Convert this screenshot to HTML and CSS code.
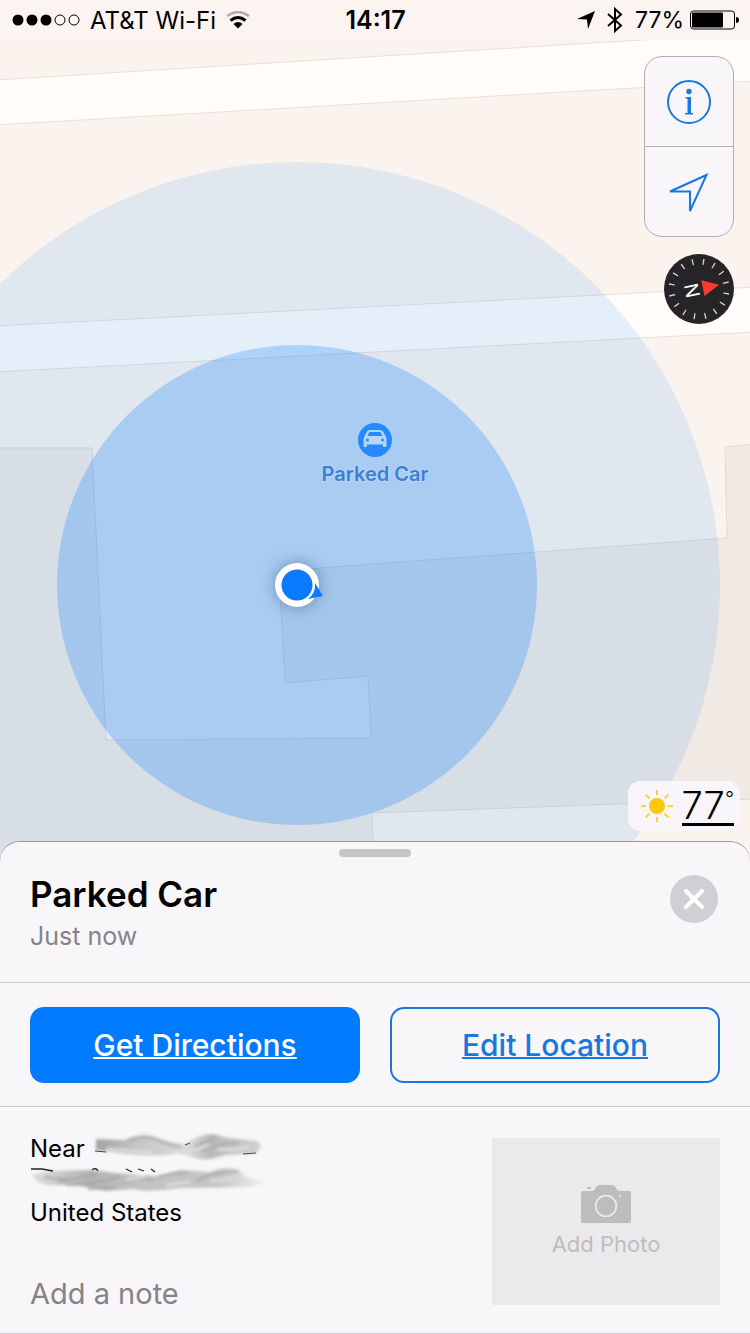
FILE: index.html
```html
<!DOCTYPE html>
<html lang="en">
<head>
    <meta charset="UTF-8">
    <meta name="viewport" content="width=device-width, initial-scale=1.0">
    <title>Maps - Parked Car</title>
    <link rel="stylesheet" href="styles.css">
</head>
<body>
    <main class="map">
        <svg class="map-canvas" viewBox="0 0 750 861" preserveAspectRatio="xMidYMax slice">
            <!-- roads -->
            <g class="road">
                <path d="M-5 80 L755 33 V81 L-5 125 Z"/>
                <path d="M-5 326 L755 287 V332 L-5 372 Z"/>
            </g>
            <!-- buildings -->
            <path class="building" d="M-5 448 H92 L106 740 L371 738 L368 676 L285 683 L279 571 L727 538 L725 447 L755 444 V799 L372 813 L374 870 H-5 Z"/>
            <!-- accuracy rings -->
            <circle class="ring-outer" cx="297" cy="585" r="423"/>
            <circle class="ring-inner" cx="297" cy="585" r="240"/>

            <!-- parked car pin -->
            <circle cx="375" cy="440" r="17" fill="#2589fb"/>
            <path fill="#b5d6fa" fill-rule="evenodd" d="M364 437 L367 431.500 Q368 430 370 430 H380 Q382 430 383 431.500 L386 437 Q386.500 438 386.500 440 V446 Q386.500 447 385.500 447 H384 Q383 447 383 446 V444.500 H367 V446 Q367 447 366 447 H364.500 Q363.500 447 363.500 446 V440 Z M369.500 432 L367.500 436 H382.500 L380.500 432 Z"/>
            <circle cx="367.500" cy="440" r="1.500" fill="#2589fb"/>
            <circle cx="382.500" cy="440" r="1.500" fill="#2589fb"/>
            <text class="pin-label" x="375" y="481">Parked Car</text>

            <!-- current location -->
            <circle class="me" cx="297" cy="585" r="22"/>
            <circle cx="297" cy="585" r="15.500" fill="#0a7aff"/>
            <path d="M315 583 L323 596 L308 599 Q316 593 315 583 Z" fill="#0a7aff"/>
        </svg>

        <header class="status-bar">
            <div class="carrier">
                <svg width="68" height="12" viewBox="0 0 68 12">
                    <circle cx="6" cy="6" r="5.500"/>
                    <circle cx="20" cy="6" r="5.500"/>
                    <circle cx="34" cy="6" r="5.500"/>
                    <circle cx="48" cy="6" r="5" fill="none" stroke="#000"/>
                    <circle cx="62" cy="6" r="5" fill="none" stroke="#000"/>
                </svg>
                <span>AT&amp;T Wi-Fi</span>
                <svg width="24" height="18" viewBox="0 0 24 18">
                    <path d="M1 5 Q12 -3 23 5" fill="none" stroke="#b3aca9" stroke-width="2.500"/>
                    <path d="M4.500 9.500 Q12 3.500 19.500 9.500" fill="none" stroke="#000" stroke-width="3"/>
                    <path d="M7.500 13 Q12 9 16.500 13 L12 17.500 Z"/>
                </svg>
            </div>
            <time>14:17</time>
            <div class="indicators">
                <svg width="18" height="18" viewBox="0 0 18 18"><path d="M18 0 L0 8 L10 8.500 L11 18 Z"/></svg>
                <svg class="bluetooth" width="16" height="28" viewBox="0 0 16 28">
                    <path d="M1 8 L14 19.500 L8 25 V3 L14 8.500 L1 20" fill="none" stroke="#000" stroke-width="2"/>
                </svg>
                <span class="percent">77%</span>
                <svg width="49" height="20" viewBox="0 0 49 20">
                    <rect x="0.500" y="1" width="44" height="18" rx="3" fill="none" stroke="#000"/>
                    <rect x="2" y="2.500" width="31" height="15" rx="1"/>
                    <path d="M46 7 Q49 7 49 10 Q49 13 46 13 Z"/>
                </svg>
            </div>
        </header>

        <div class="map-tools">
            <div class="tool-box">
                <button type="button" aria-label="Map info">
                    <svg width="44" height="44" viewBox="0 0 44 44">
                        <circle cx="22" cy="22" r="21" fill="none" stroke="#1878e0" stroke-width="2"/>
                        <circle cx="22" cy="11.500" r="2.700" fill="#1878e0"/>
                        <path d="M18.500 17 H24 V33 H26 V34.500 H18 V33 H20.500 V18.500 H18.500 Z" fill="#1878e0"/>
                    </svg>
                </button>
                <button type="button" aria-label="Track location">
                    <svg width="44" height="44" viewBox="0 0 44 44">
                        <path d="M39.500 5 L3 21.500 H23 V41 Z" fill="none" stroke="#1878e0" stroke-width="2"/>
                    </svg>
                </button>
            </div>
            <button class="compass" type="button" aria-label="Compass">
                <svg width="70" height="70" viewBox="0 0 70 70">
                    <circle cx="35" cy="35" r="35" fill="#262427"/>
                    <circle cx="35" cy="35" r="27.500" fill="none" stroke="#d8d6d6" stroke-width="6" pathLength="160" stroke-dasharray="1.200 8.800" transform="rotate(8 35 35)"/>
                    <g transform="rotate(78 35 35)">
                        <path d="M35 14.500 L43 31 H27 Z" fill="#fb3b30"/>
                        <text class="compass-n" x="35" y="49">N</text>
                    </g>
                </svg>
            </button>
        </div>

        <a class="weather" href="#weather">
            <svg width="34" height="34" viewBox="0 0 34 34">
                <circle cx="17" cy="17" r="8" fill="#fdc70c"/>
                <path d="M17 1 V6 M17 28 V33 M1 17 H6 M28 17 H33 M5.500 5.500 L9.500 9.500 M24.500 24.500 L28.500 28.500 M28.500 5.500 L24.500 9.500 M5.500 28.500 L9.500 24.500" stroke="#fbd049" stroke-width="2"/>
            </svg>
            <span class="temp">77<span class="degree">°</span></span>
        </a>
    </main>

    <section class="sheet">
        <div class="handle"></div>
        <div class="sheet-header">
            <div>
                <h1>Parked Car</h1>
                <p>Just now</p>
            </div>
            <button class="close" type="button" aria-label="Close">
                <svg width="48" height="48" viewBox="0 0 48 48">
                    <path d="M16 16 L32 32 M32 16 L16 32" stroke="#fff" stroke-width="4" stroke-linecap="round"/>
                </svg>
            </button>
        </div>

        <div class="actions">
            <a class="btn primary" href="#directions">Get Directions</a>
            <a class="btn" href="#edit">Edit Location</a>
        </div>

        <div class="details">
            <div class="info">
                <address>
                    <div class="line">Near
                        <svg width="172" height="32" viewBox="0 0 172 32">
                            <defs>
                                <filter id="soft" x="-10%" y="-30%" width="120%" height="160%"><feGaussianBlur stdDeviation="1.500"/></filter>
                                <filter id="streak" x="-10%" y="-60%" width="120%" height="220%"><feGaussianBlur stdDeviation="0.500"/></filter>
                                <linearGradient id="ink1" x1="0" x2="1" y1="0" y2="0">
                                    <stop offset="0" stop-color="#a3a2a4"/>
                                    <stop offset="0.250" stop-color="#c6c5c7"/>
                                    <stop offset="0.550" stop-color="#dbdadc"/>
                                    <stop offset="0.700" stop-color="#b9b8ba"/>
                                    <stop offset="1" stop-color="#d0cfd1"/>
                                </linearGradient>
                                <linearGradient id="ink2" x1="0" x2="1" y1="0" y2="0">
                                    <stop offset="0" stop-color="#dedde0"/>
                                    <stop offset="0.250" stop-color="#b2b1b3"/>
                                    <stop offset="0.450" stop-color="#c2c1c3"/>
                                    <stop offset="0.800" stop-color="#c4c3c5"/>
                                    <stop offset="1" stop-color="#f4f2f5"/>
                                </linearGradient>
                            </defs>
                            <g filter="url(#soft)">
                                <path d="M3 8 L32 9 Q46 2 60 5 Q76 11 92 13 Q106 3 120 3 L136 7 L164 10 L168 14 L164 22 L132 24 Q112 31 102 27 L84 22 Q70 26 44 24 L3 19 Z" fill="url(#ink1)"/>
                                <path d="M34 10 Q50 4 62 8 Q74 14 88 16 M100 17 Q112 10 122 7 M108 21 Q130 11 146 12" fill="none" stroke="#a9a8ab" stroke-width="2"/>
                                <path d="M14 18 Q40 20 60 22 M94 19 Q108 18 116 14 M124 18 Q140 20 156 16" fill="none" stroke="#dddcde" stroke-width="3"/>
                            </g>
                            <path d="M2 20 L13 21 M92 14 L97 12 M150 23 L163 22" fill="none" stroke="#444" filter="url(#streak)"/>
                        </svg>
                    </div>
                    <div class="line">
                        <svg width="236" height="32" viewBox="0 0 236 32">
                            <g filter="url(#soft)">
                                <path d="M2 11 L22 8 L60 7 L96 11 L126 13 L150 7 L180 9 Q194 3 208 6 L216 14 L236 19 L222 24 L150 25 Q116 30 104 26 L76 28 L50 23 L18 22 Q4 20 2 11 Z" fill="url(#ink2)"/>
                                <path d="M14 14 Q28 17 44 16 M28 19 Q50 15 66 11 M36 22 Q66 21 90 14 M94 20 Q108 14 124 17 M128 14 Q146 9 158 10 M166 18 Q184 8 208 9 M58 26 L84 25" fill="none" stroke="#9d9c9f" stroke-width="1.500"/>
                                <path d="M96 17 L116 13 M136 22 L160 19 M180 18 L204 16" fill="none" stroke="#dddcdf" stroke-width="3"/>
                            </g>
                            <path d="M1 6 L12 6 L23 8 M62 7 Q66 4 68 8 M96 6 L102 9 M108 6 L114 8 M121 6 L125 9" fill="none" stroke="#222" stroke-width="1.300" filter="url(#streak)"/>
                        </svg>
                    </div>
                    <div class="line">United States</div>
                </address>
                <input class="note" type="text" placeholder="Add a note" aria-label="Add a note">
            </div>
            <button class="photo" type="button">
                <svg width="50" height="38" viewBox="0 0 50 38">
                    <path d="M2 6 H11 Q13 6 14 4 Q15.500 0 19 0 H31 Q34 0 35.500 4 Q36.500 6 38 6 H48 Q50 6 50 8 V36 Q50 38 48 38 H2 Q0 38 0 36 V8 Q0 6 2 6 Z" fill="#bebcbf"/>
                    <rect x="6" y="2" width="4" height="2" fill="#bebcbf"/>
                    <circle cx="25" cy="21" r="10.300" fill="none" stroke="#ece9ec" stroke-width="1.700"/>
                    <circle cx="39" cy="11" r="1" fill="#ece9ec"/>
                </svg>
                Add Photo
            </button>
        </div>
    </section>
</body>
</html>
```

FILE: styles.css
```css
* {
    box-sizing: border-box;
}

body {
    margin: 0;
    min-height: 100vh;
    display: flex;
    flex-direction: column;
    font-family: Inter, "Liberation Sans", sans-serif;
    color: #000;
    background-color: #f9f6fa;
}

button {
    border: none;
    padding: 0;
    background: none;
    font-family: inherit;
    cursor: pointer;
}

svg {
    display: block;
    flex-shrink: 0;
}

/* map */
.map {
    position: relative;
    flex: 1;
    display: flex;
    flex-direction: column;
    align-items: flex-end;
    overflow: hidden;
    background-color: #faf3ee;
}

.map-canvas {
    position: absolute;
    inset: 0;
    width: 100%;
    height: 100%;
}

.road path {
    fill: #fffcf9;
    stroke: #e6e0dc;
}

.building {
    fill: #f1e9e3;
    stroke: #e0d9d4;
}

.ring-outer {
    fill: rgba(20, 140, 255, 0.11);
}

.ring-inner {
    fill: rgba(0, 122, 255, 0.24);
}

.pin-label {
    font-size: 20px;
    font-weight: 600;
    text-anchor: middle;
    fill: #3b80d4;
    stroke: #b8d5f8;
    stroke-width: 2px;
    paint-order: stroke;
}

.me {
    fill: white;
    filter: drop-shadow(0 0 8px rgba(40, 70, 110, 0.5));
}

/* status bar */
.status-bar {
    position: relative;
    width: 100%;
    height: 40px;
    padding: 0 11px 0 12px;
    display: grid;
    grid-template-columns: 1fr auto 1fr;
    align-items: center;
    font-size: 24px;
    background-color: rgba(251, 243, 239, 0.95);
}

.status-bar time {
    font-size: 25px;
    font-weight: 600;
}

.carrier {
    display: flex;
    align-items: center;
    gap: 10px;
}

.indicators {
    display: flex;
    align-items: center;
    justify-content: flex-end;
    gap: 6px;
}

.bluetooth {
    margin: 0 6px;
}

.percent {
    font-size: 23px;
}

/* buttons over the map */
.map-tools {
    position: relative;
    display: flex;
    flex-direction: column;
    align-items: flex-end;
    gap: 17px;
    padding: 16px 16px 0;
}

.tool-box {
    width: 90px;
    border: 1px solid #b0adb0;
    border-radius: 18px;
    background-color: #f9f6fa;
}

.tool-box button {
    display: flex;
    width: 100%;
    height: 89px;
    align-items: center;
    justify-content: center;
}

.tool-box button + button {
    height: 90px;
    border-top: 1px solid #b0adb0;
}

.compass {
    border-radius: 50%;
}

.weather {
    position: relative;
    display: flex;
    align-items: center;
    gap: 8px;
    height: 50px;
    margin: auto 10px 30px;
    padding: 0 6px 0 12px;
    border-radius: 12px;
    background-color: #f8f6fa;
    color: #000;
    text-decoration: none;
}

.temp {
    display: flex;
    border-bottom: 3px solid #000;
    font-size: 38px;
    font-weight: 300;
    line-height: 36px;
}

.degree {
    font-size: 20px;
    line-height: 24px;
}

.compass-n {
    font-size: 19px;
    text-anchor: middle;
    fill: white;
}

/* bottom sheet */
.sheet {
    position: relative;
    margin-top: -20px;
    border-top: 1px solid #99969a;
    border-bottom: 1px solid #c8c7cb;
    border-radius: 20px 20px 0 0;
    background-color: #f9f6fa;
}

.handle {
    width: 72px;
    height: 8px;
    margin: 7px auto 15px;
    border-radius: 4px;
    background-color: #c6c4c7;
}

.sheet-header {
    display: flex;
    justify-content: space-between;
    align-items: flex-start;
    padding: 0 32px 26px 30px;
    border-bottom: 1px solid #c8c7cb;
}

h1 {
    margin: 0;
    font-size: 35px;
    font-weight: 600;
    line-height: 44px;
}

.sheet-header p {
    margin: 0;
    font-size: 25px;
    line-height: 40px;
    color: #858388;
}

.close {
    margin-top: 3px;
    border-radius: 50%;
    background-color: #d1cfd4;
}

.actions {
    display: grid;
    grid-template-columns: 1fr 1fr;
    gap: 30px;
    padding: 24px 30px 23px;
    border-bottom: 1px solid #c8c7cb;
}

.btn {
    border: 2px solid #1878d8;
    border-radius: 14px;
    color: #1878e0;
    font-size: 30px;
    font-weight: 500;
    line-height: 72px;
    text-align: center;
    text-decoration: underline;
    text-decoration-thickness: 2px;
    text-decoration-skip-ink: none;
}

.btn.primary {
    border-color: #007aff;
    background-color: #007aff;
    color: white;
}

.details {
    display: flex;
    justify-content: space-between;
    align-items: center;
    padding: 24px 30px 22px;
}

.info {
    display: flex;
    flex-direction: column;
    justify-content: space-between;
    height: 180px;
}

address {
    font-style: normal;
    font-size: 24px;
}

.line {
    display: flex;
    gap: 8px;
    height: 32px;
    line-height: 36px;
}

.note {
    width: 100%;
    height: 36px;
    padding: 0;
    border: none;
    background: none;
    font-family: inherit;
    font-size: 29px;
}

.note::placeholder {
    color: #858388;
    opacity: 1;
}

.photo {
    display: flex;
    flex-direction: column;
    align-items: center;
    justify-content: center;
    gap: 8px;
    width: 228px;
    height: 167px;
    background-color: #ece9ec;
    color: #bebcbf;
    font-size: 22px;
    line-height: 26px;
}
```
